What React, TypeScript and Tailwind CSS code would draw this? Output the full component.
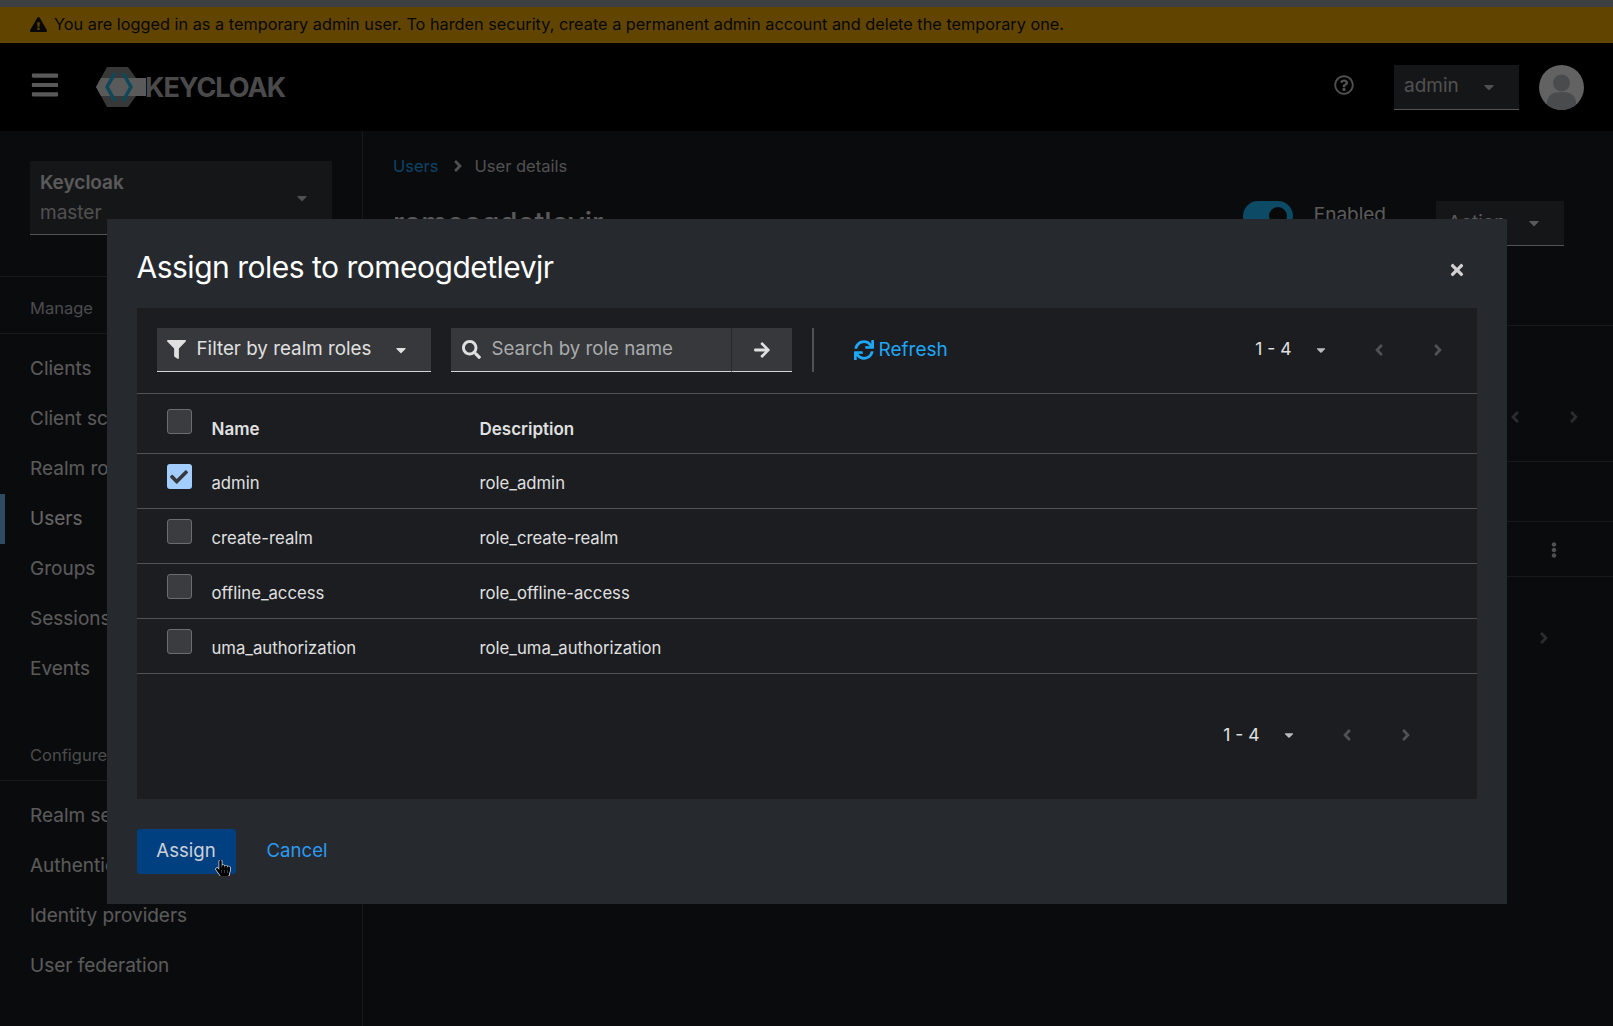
import {
  FaAngleLeft,
  FaAngleRight,
  FaArrowRight,
  FaBars,
  FaCaretDown,
  FaCheck,
  FaEllipsisV,
  FaExclamationTriangle,
  FaFilter,
  FaHandPointer,
  FaRegQuestionCircle,
  FaSearch,
  FaSync,
  FaTimes,
} from "react-icons/fa";

const manageItems = ["Clients", "Client scopes", "Realm roles", "Users", "Groups", "Sessions", "Events"];
const configureItems = ["Realm settings", "Authentication", "Identity providers", "User federation"];
const roles = [
  { name: "admin", description: "role_admin", checked: true },
  { name: "create-realm", description: "role_create-realm", checked: false },
  { name: "offline_access", description: "role_offline-access", checked: false },
  { name: "uma_authorization", description: "role_uma_authorization", checked: false },
];

function KeycloakLogo() {
  return (
    <div className="ml-[36px] flex items-center">
      <svg width="50" height="40" viewBox="0 0 50 40">
        <path d="M11 0H32L40 11H50V29H40L32 40H11L0 20Z" fill="#8c8c8c" />
        <path d="M5 11H50V29H5L0 20Z" fill="#e0e0e0" />
        <path d="M17 6L9 20L17 34H21L13 20L21 6Z" fill="#26b5de" />
        <path d="M29 6L37 20L29 34H25L33 20L25 6Z" fill="#26b5de" />
      </svg>
      <span className="ml-[-1px] mt-[3px] text-[27px] font-bold tracking-[-1px] text-[#b8b8b8]">KEYCLOAK</span>
    </div>
  );
}

function NavItem({ label, active }: { label: string; active?: boolean }) {
  return (
    <div
      className={`flex h-[50px] items-center text-[19px] ${
        active ? "border-l-[5px] border-[#73bcf7] pl-[25px] text-white" : "pl-[30px] text-[#e0e0e0]"
      }`}
    >
      {label}
    </div>
  );
}

function Sidebar() {
  return (
    <aside className="flex w-[363px] shrink-0 flex-col border-r border-[#3c3f42]">
      <div className="mx-[30px] mt-[30px] flex h-[74px] w-[302px] items-center justify-between border-b border-[#d2d2d2] bg-[#36383c] pl-[10px] pr-[22px]">
        <div className="text-[19px] leading-[30px]">
          <div className="font-semibold text-[#e0e0e0]">Keycloak</div>
          <div className="text-[#c8c8c8]">master</div>
        </div>
        <FaCaretDown className="text-[#c8c8c8]" size={16} />
      </div>
      <div className="mt-[41px] flex h-[58px] items-center border-y border-[#3c3f42] pl-[30px] pt-[7px] text-[16.5px] text-[#b8bbbe]">
        Manage
      </div>
      <nav className="pt-[10px]">
        {manageItems.map((item) => (
          <NavItem key={item} label={item} active={item === "Users"} />
        ))}
      </nav>
      <div className="mt-[30px] flex h-[57px] items-center border-b border-[#3c3f42] pl-[30px] pt-[7px] text-[16.5px] text-[#b8bbbe]">
        Configure
      </div>
      <nav className="pt-[10px]">
        {configureItems.map((item) => (
          <NavItem key={item} label={item} />
        ))}
      </nav>
    </aside>
  );
}

function UserDetails() {
  return (
    <main className="flex-1 text-[#e0e0e0]">
      <div className="flex h-[70px] items-start pl-[30px] pt-[23px] text-[16.5px]">
        <span className="text-[#1fa7f8]">Users</span>
        <FaAngleRight className="ml-[10px] mt-[3px] text-[#c8c8c8]" size={18} />
        <span className="ml-[8px] text-[#c8c8c8]">User details</span>
      </div>
      <div className="flex h-[125px] items-start justify-between border-b border-[#3c3f42] pl-[30px] pr-[49px]">
        <h2 className="text-[29px] font-medium">romeogdetlevjr</h2>
        <div className="flex items-start">
          <div className="flex h-[30px] w-[50px] items-center justify-end rounded-full bg-[#1fb8ff] pr-[6px]">
            <span className="h-[18px] w-[18px] rounded-full bg-[#151515]" />
          </div>
          <span className="ml-[21px] mr-[50px] text-[19px]">Enabled</span>
          <div className="flex h-[45px] w-[128px] items-center justify-between border-b border-[#d2d2d2] bg-[#36383c] pl-[12px] pr-[22px] text-[19px]">
            Action
            <FaCaretDown size={16} />
          </div>
        </div>
      </div>
      <div className="flex h-[136px] items-end justify-end border-b border-[#3c3f42] pb-[35px] pr-[30px] text-[#6a6e73]">
        <FaAngleLeft size={18} />
        <FaAngleRight className="ml-[41px]" size={18} />
      </div>
      <div className="h-[60px] border-b border-[#3c3f42]" />
      <div className="flex h-[55px] items-center justify-end border-b border-[#3c3f42] pr-[51px] pt-[2px] text-[#c8c8c8]">
        <FaEllipsisV size={16} />
      </div>
      <div className="flex h-[122px] items-center justify-end pr-[60px] text-[#6a6e73]">
        <FaAngleRight size={18} />
      </div>
    </main>
  );
}

function Pagination({ className }: { className: string }) {
  return (
    <div className={`flex items-center text-[17.5px] text-[#e0e0e0] ${className}`}>
      <span>1 - 4</span>
      <FaCaretDown className="ml-[22px] text-[#b8bbbe]" size={14} />
      <span className="ml-[22px] flex w-[59px] justify-center text-[#4f5255]">
        <FaAngleLeft size={18} />
      </span>
      <span className="flex w-[59px] justify-center text-[#4f5255]">
        <FaAngleRight size={18} />
      </span>
    </div>
  );
}

function Checkbox({ checked }: { checked?: boolean }) {
  if (checked) {
    return (
      <span className="flex h-[25px] w-[25px] shrink-0 items-center justify-center rounded-[3px] bg-[#a3cdfc] text-[#36383c]">
        <FaCheck size={18} />
      </span>
    );
  }
  return <span className="block h-[25px] w-[25px] shrink-0 rounded-[3px] border border-[#6a6e73] bg-[#3a3c3f]" />;
}

function AssignModal() {
  return (
    <div className="fixed inset-0 flex items-start justify-center bg-black/60 pt-[219px]">
      <div className="relative flex h-[685px] w-[1400px] flex-col bg-[#26292d] px-[30px]">
        <div className="flex h-[89px] items-center justify-between pt-[8px]">
          <h1 className="text-[30px] font-normal tracking-[-0.5px] text-white">Assign roles to romeogdetlevjr</h1>
          <FaTimes className="mr-[11px] mt-[4px] text-[#d2d2d2]" size={18} />
        </div>

        <div className="h-[491px] bg-[#1b1d21]">
          <div className="flex h-[86px] items-center border-b border-[#4f5255] px-[20px] pb-[1px]">
            <div className="flex h-[44px] w-[274px] items-center border-b border-[#d2d2d2] bg-[#36383c] pl-[10px] text-[18.8px] text-[#e0e0e0]">
              <FaFilter size={19} />
              <span className="ml-[11px]">Filter by realm roles</span>
              <FaCaretDown className="ml-[22px]" size={16} />
            </div>
            <div className="ml-[20px] flex h-[44px] w-[280px] items-center border-b border-[#d2d2d2] bg-[#36383c] pl-[11px] text-[18.7px] text-[#aaabac]">
              <FaSearch className="text-[#e0e0e0]" size={19} />
              <span className="ml-[11px]">Search by role name</span>
            </div>
            <div className="flex h-[44px] w-[61px] items-center justify-center border-b border-l border-[#d2d2d2] border-l-[#26292d] bg-[#36383c] text-[#e0e0e0]">
              <FaArrowRight size={18} />
            </div>
            <div className="ml-[20px] h-[44px] w-[2px] bg-[#4f5255]" />
            <div className="ml-[40px] flex items-center gap-[5px] text-[19px] text-[#1fa7f8]">
              <FaSync size={20} />
              Refresh
            </div>
            <Pagination className="ml-auto mr-[-11px] mt-[-1px]" />
          </div>

          <div className="flex h-[60px] border-b border-[#4f5255] pl-[30px] text-[17px] font-semibold text-[#e0e0e0]">
            <div className="pt-[15px]">
              <Checkbox />
            </div>
            <div className="w-[288px] shrink-0 pl-[20px] pt-[23px]">Name</div>
            <div className="pt-[23px]">Description</div>
          </div>
          {roles.map((role) => (
            <div key={role.name} className="flex h-[55px] border-b border-[#4f5255] pl-[30px] text-[16.7px] text-[#e0e0e0]">
              <div className="pt-[10px]">
                <Checkbox checked={role.checked} />
              </div>
              <div className="w-[288px] shrink-0 pl-[20px] pt-[17px]">{role.name}</div>
              <div className="pt-[17px]">{role.description}</div>
            </div>
          ))}
          <Pagination className="mt-[48px] justify-end pr-[41px]" />
        </div>

        <div className="mt-[30px] flex items-center">
          <button className="h-[45px] w-[99px] rounded-[3px] bg-[#004080] pb-[1px] text-[18.6px] text-[#ccd0d8]">Assign</button>
          <button className="ml-[31px] pb-[1px] text-[18.6px] text-[#2b9af3]">Cancel</button>
        </div>

        <FaHandPointer
          className="absolute left-[108px] top-[641px] text-black"
          size={16}
          stroke="white"
          strokeWidth={40}
          paintOrder="stroke"
        />
      </div>
    </div>
  );
}

export default function App() {
  return (
    <div className="relative flex h-screen flex-col overflow-hidden bg-[#1b1d21] font-['Inter','Noto_Sans',sans-serif]">
      <div className="h-[7px] shrink-0 bg-[#9a9da0]" />
      <div className="flex h-[36px] shrink-0 items-center gap-[7px] bg-[#f0ab00] pb-[1px] pl-[30px] text-[16.3px] text-[#151515]">
        <FaExclamationTriangle size={17} />
        You are logged in as a temporary admin user. To harden security, create a permanent admin account and delete the
        temporary one.
      </div>
      <header className="flex h-[88px] shrink-0 items-center bg-black">
        <FaBars className="ml-[30px] mt-[-4px] text-[#e0e0e0]" size={30} />
        <KeycloakLogo />
        <FaRegQuestionCircle className="ml-auto mt-[-4px] text-[#c8c8c8]" size={20} />
        <div className="ml-[40px] flex h-[45px] w-[125px] items-center justify-between border-b border-[#d2d2d2] bg-[#36383c] pl-[10px] pr-[22px] text-[19px] text-[#c8c8c8]">
          admin
          <FaCaretDown size={16} />
        </div>
        <svg className="ml-[20px] mr-[29px] rounded-full" width="45" height="45" viewBox="0 0 45 45">
          <rect width="45" height="45" fill="#f5f5f5" />
          <circle cx="22.5" cy="18" r="8.5" fill="#b8bbbe" />
          <path d="M8 45V38C8 30 14 27 22.5 27S37 30 37 38V45Z" fill="#b8bbbe" />
        </svg>
      </header>
      <div className="flex flex-1 overflow-hidden">
        <Sidebar />
        <UserDetails />
      </div>
      <AssignModal />
    </div>
  );
}
